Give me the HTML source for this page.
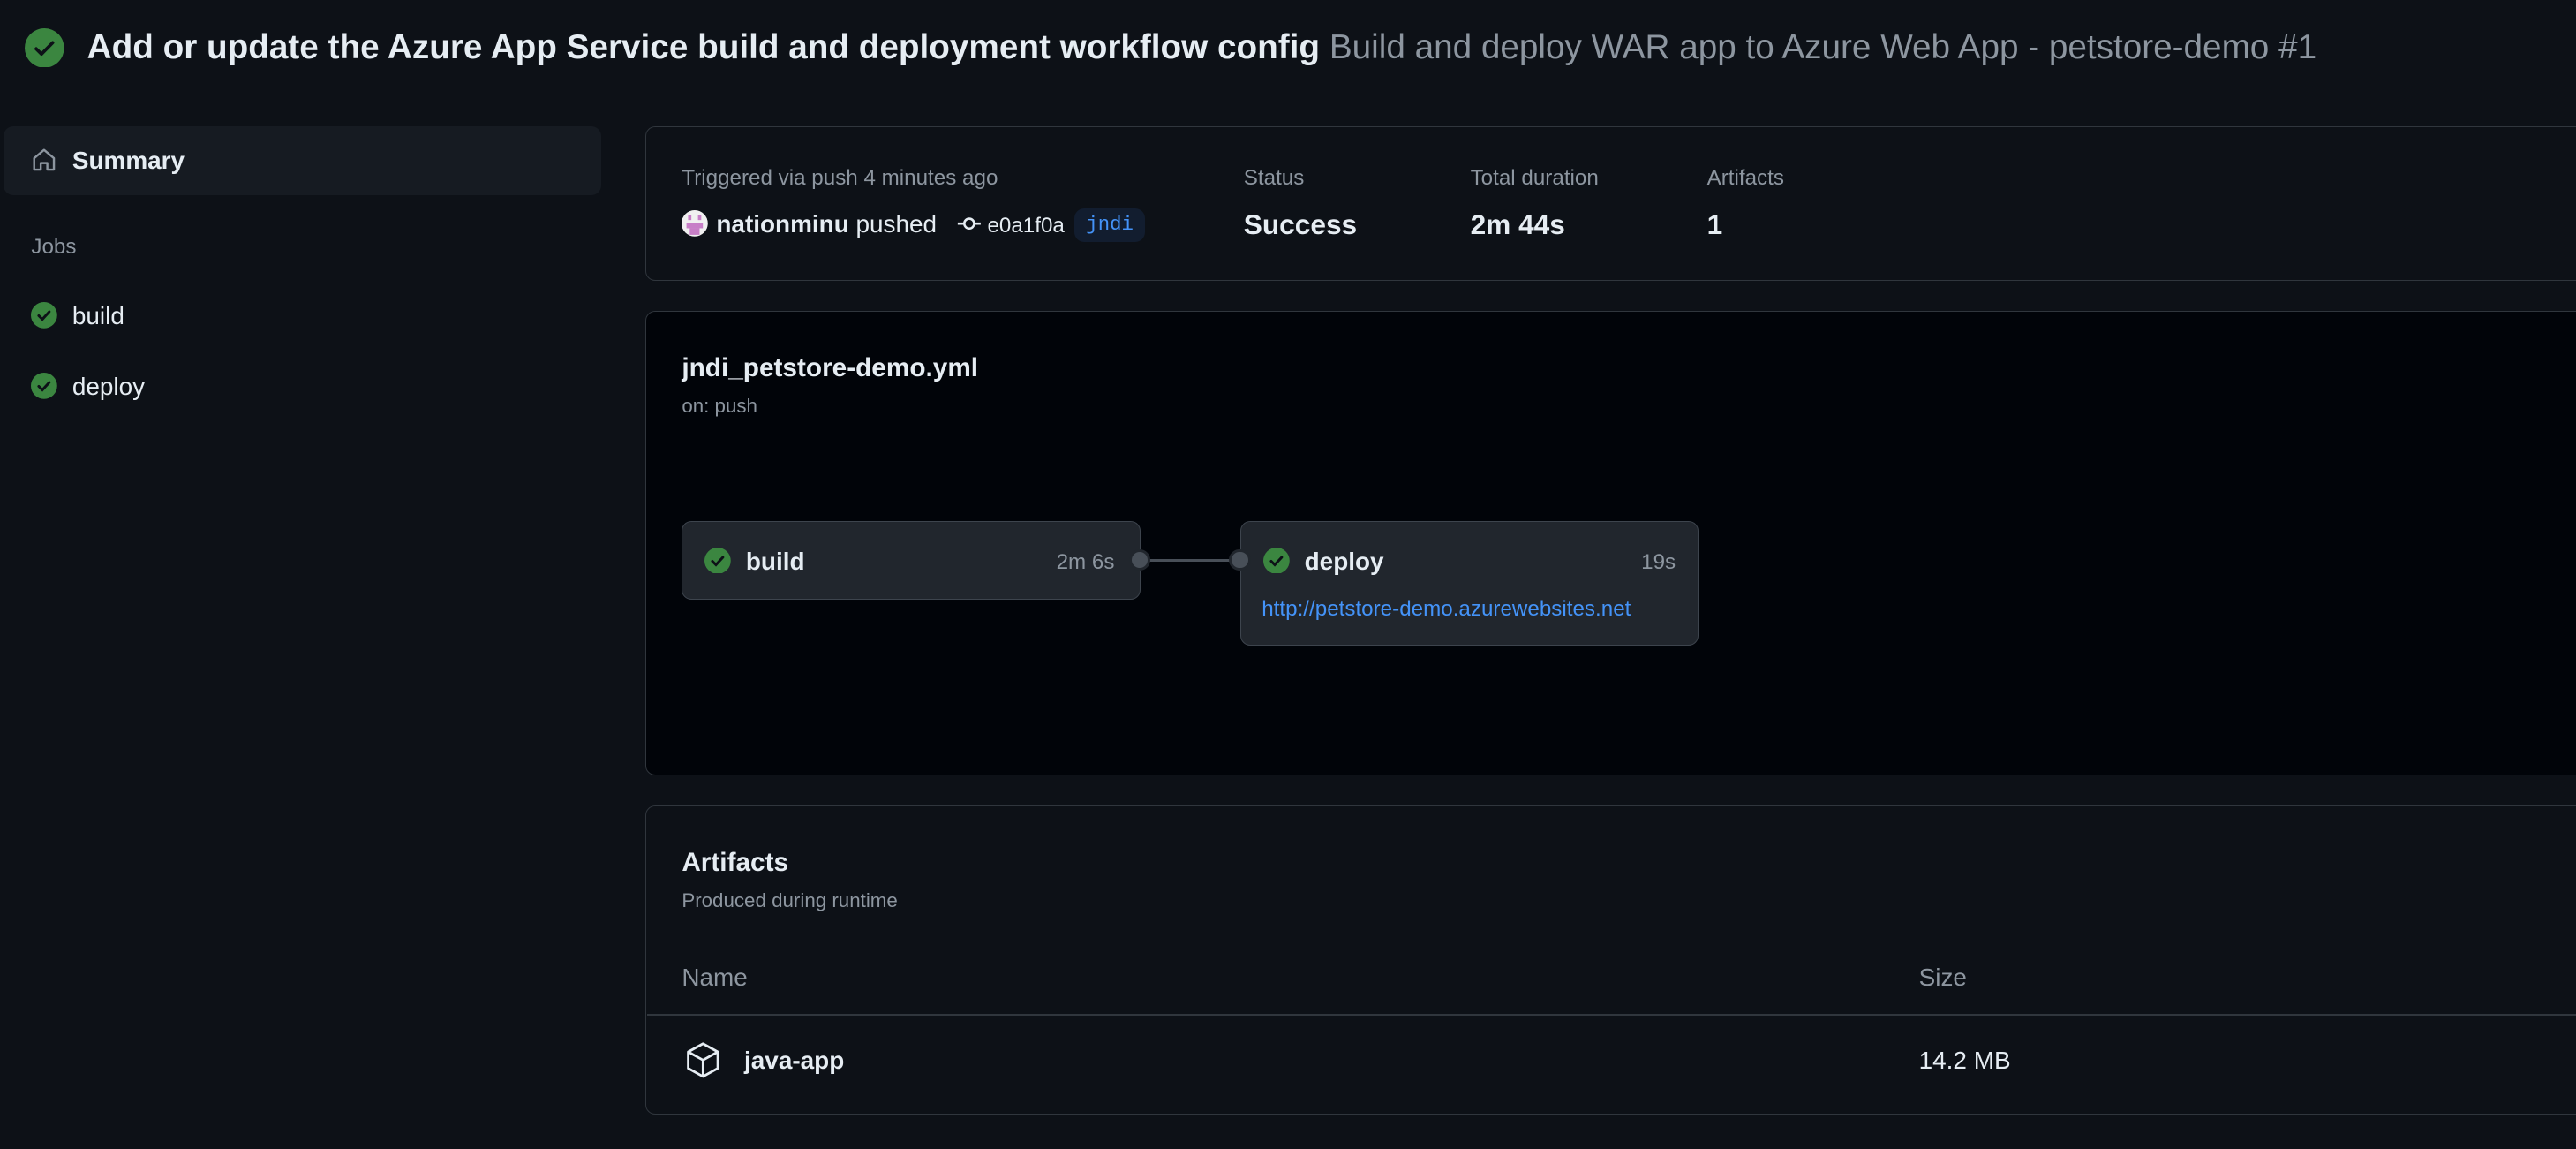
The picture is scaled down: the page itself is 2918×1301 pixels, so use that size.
<!DOCTYPE html>
<html><head><meta charset="utf-8"><style>
html,body{margin:0;padding:0;background:#0d1117;overflow:hidden}
#w{zoom:1.861;width:1568px;height:699px;position:relative;font-family:"Liberation Sans",sans-serif;color:#e6edf3}
.a{position:absolute;white-space:nowrap}
.g{color:#8d96a0}
.card{position:absolute;left:393px;width:1200px;border:1px solid #30363d;border-radius:6px;box-sizing:border-box}
.ck{position:absolute}
.node{position:absolute;background:#21262d;border:1px solid #3d444d;border-radius:6px;box-sizing:border-box}
.dot{position:absolute;width:10px;height:10px;border-radius:50%;background:#484f58;border:2px solid #21262d}
</style></head><body><div id="w">
<svg class="ck" style="left:15px;top:17px" width="24" height="24" viewBox="0 0 24 24"><circle cx="12" cy="12" r="12" fill="#3b8640"/><path d="M7 12.5l3.2 3.2L17 8.8" stroke="#0d1117" stroke-width="2" fill="none" stroke-linecap="round" stroke-linejoin="round"/></svg>
<div class="a" style="left:53px;top:17px;font-size:20.8px;font-weight:bold">Add or update the Azure App Service build and deployment workflow config <span class="g" style="font-weight:normal">Build and deploy WAR app to Azure Web App - petstore-demo #1</span></div>

<div class="a" style="left:2px;top:77px;width:364px;height:42px;background:#161b22;border-radius:6px"></div>
<svg class="ck" style="left:19px;top:89px" width="16" height="16" viewBox="0 0 16 16"><path d="M2 7L8 2l6 5v7H10V10H6v4H2z" stroke="#8d96a0" stroke-width="1.3" fill="none" stroke-linejoin="round"/></svg>
<div class="a" style="left:44px;top:89px;font-size:15px;font-weight:bold">Summary</div>
<div class="a g" style="left:19px;top:143px;font-size:13px">Jobs</div>
<svg class="ck" style="left:19px;top:184px" width="16" height="16" viewBox="0 0 16 16"><circle cx="8" cy="8" r="8" fill="#3b8640"/><path d="M4.8 8.3l2.2 2.2 4.2-4.6" stroke="#0d1117" stroke-width="1.6" fill="none" stroke-linecap="round"/></svg>
<div class="a" style="left:44px;top:184px;font-size:15px">build</div>
<svg class="ck" style="left:19px;top:227px" width="16" height="16" viewBox="0 0 16 16"><circle cx="8" cy="8" r="8" fill="#3b8640"/><path d="M4.8 8.3l2.2 2.2 4.2-4.6" stroke="#0d1117" stroke-width="1.6" fill="none" stroke-linecap="round"/></svg>
<div class="a" style="left:44px;top:227px;font-size:15px">deploy</div>

<div class="card" style="top:77px;height:94px"></div>
<div class="a g" style="left:415px;top:101px;font-size:13px">Triggered via push 4 minutes ago</div>
<svg class="ck" style="left:415px;top:128px" width="16" height="16" viewBox="0 0 16 16"><circle cx="8" cy="8" r="8" fill="#f0f0f0"/><rect x="4" y="3" width="2" height="3" fill="#c77fc7"/><rect x="10" y="3" width="2" height="3" fill="#c77fc7"/><rect x="3" y="8" width="10" height="3" fill="#c77fc7"/><rect x="5" y="11" width="6" height="4" fill="#c77fc7"/></svg>
<div class="a" style="left:436px;top:128px;font-size:15px"><b>nationminu</b> pushed</div>
<svg class="ck" style="left:582px;top:130px" width="16" height="12" viewBox="0 0 16 12"><circle cx="8" cy="6" r="3" stroke="#e6edf3" stroke-width="1.4" fill="none"/><path d="M1 6h4M11 6h4" stroke="#e6edf3" stroke-width="1.4"/></svg>
<div class="a" style="left:601px;top:130px;font-size:13px">e0a1f0a</div>
<div class="a" style="left:654px;top:127px;width:43px;height:20px;background:#121d2f;border-radius:6px;color:#4493f8;font-family:'Liberation Mono',monospace;font-size:12px;line-height:20px;text-align:center">jndi</div>
<div class="a g" style="left:757px;top:101px;font-size:13px">Status</div>
<div class="a" style="left:757px;top:127px;font-size:17px;font-weight:bold">Success</div>
<div class="a g" style="left:895px;top:101px;font-size:13px">Total duration</div>
<div class="a" style="left:895px;top:127px;font-size:17px;font-weight:bold">2m 44s</div>
<div class="a g" style="left:1039px;top:101px;font-size:13px">Artifacts</div>
<div class="a" style="left:1039px;top:127px;font-size:17px;font-weight:bold">1</div>

<div class="card" style="top:189px;height:283px;background:#010409"></div>
<div class="a" style="left:415px;top:215px;font-size:16px;font-weight:bold">jndi_petstore-demo.yml</div>
<div class="a g" style="left:415px;top:240px;font-size:12px">on: push</div>
<div class="a" style="left:694px;top:340px;width:61px;height:2px;background:#484f58"></div>
<div class="node" style="left:415px;top:317px;width:279px;height:48px"></div>
<svg class="ck" style="left:429px;top:333px" width="16" height="16" viewBox="0 0 16 16"><circle cx="8" cy="8" r="8" fill="#3b8640"/><path d="M4.8 8.3l2.2 2.2 4.2-4.6" stroke="#0d1117" stroke-width="1.6" fill="none" stroke-linecap="round"/></svg>
<div class="a" style="left:454px;top:333px;font-size:15px;font-weight:bold">build</div>
<div class="a g" style="left:643px;top:335px;font-size:13px">2m 6s</div>
<div class="node" style="left:755px;top:317px;width:279px;height:76px"></div>
<div class="dot" style="left:687px;top:334px"></div>
<div class="dot" style="left:748px;top:334px"></div>
<svg class="ck" style="left:769px;top:333px" width="16" height="16" viewBox="0 0 16 16"><circle cx="8" cy="8" r="8" fill="#3b8640"/><path d="M4.8 8.3l2.2 2.2 4.2-4.6" stroke="#0d1117" stroke-width="1.6" fill="none" stroke-linecap="round"/></svg>
<div class="a" style="left:794px;top:333px;font-size:15px;font-weight:bold">deploy</div>
<div class="a g" style="left:999px;top:335px;font-size:13px">19s</div>
<div class="a" style="left:768px;top:363px;font-size:13px;color:#4493f8">http://petstore-demo.azurewebsites.net</div>

<div class="card" style="top:490px;height:188px"></div>
<div class="a" style="left:415px;top:516px;font-size:16px;font-weight:bold">Artifacts</div>
<div class="a g" style="left:415px;top:541px;font-size:12px">Produced during runtime</div>
<div class="a g" style="left:415px;top:586px;font-size:15px">Name</div>
<div class="a g" style="left:1168px;top:586px;font-size:15px">Size</div>
<div class="a" style="left:394px;top:617px;width:1200px;height:1px;background:#30363d"></div>
<svg class="ck" style="left:416px;top:633px" width="24" height="24" viewBox="0 0 24 24"><path d="M12 2l9 5v10l-9 5-9-5V7z M3 7l9 5 9-5 M12 12v10" stroke="#e6edf3" stroke-width="1.5" fill="none" stroke-linejoin="round"/></svg>
<div class="a" style="left:453px;top:637px;font-size:15px;font-weight:bold">java-app</div>
<div class="a" style="left:1168px;top:637px;font-size:15px">14.2 MB</div>
</div></body></html>
